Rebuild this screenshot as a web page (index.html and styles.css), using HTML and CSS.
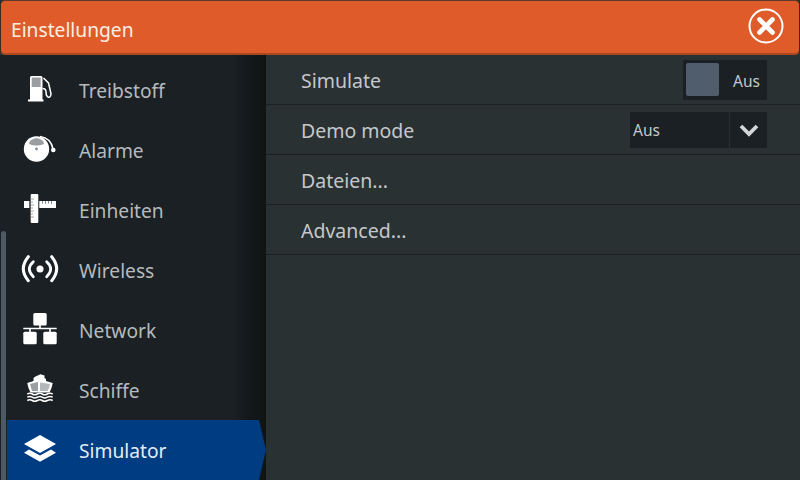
FILE: index.html
```html
<!DOCTYPE html>
<html lang="de">
<head>
    <meta charset="UTF-8">
    <title>Einstellungen</title>
    <link rel="stylesheet" href="styles.css">
</head>
<body>
    <div class="screen">
        <header class="title-bar">
            <span class="title">Einstellungen</span>
            <svg class="close-icon" width="36" height="36" viewBox="0 0 36 36">
                <circle cx="18" cy="18" r="16.5" fill="none" stroke="#fff" stroke-width="2"/>
                <path d="M11.5 11.5 L24.5 24.5 M24.5 11.5 L11.5 24.5" stroke="#fff" stroke-width="4.6" stroke-linecap="round"/>
            </svg>
        </header>

        <div class="main">
            <nav class="sidebar">
                <div class="scrollbar"></div>
                <div class="menu-item">
                    <svg class="menu-icon" width="40" height="40" viewBox="0 0 40 40">
                        <path d="M10 7.500 Q10 6 11.500 6 H21 Q22.500 6 22.500 7.500 V29.500 H23.500 V31.500 H8 V29.500 H10 Z" fill="#fff"/>
                        <rect x="11.700" y="7.500" width="9" height="9.500" fill="#9a9ea1"/>
                        <path d="M23.500 8 L28.500 13 Q30 19 31 24 Q30.500 28 28 27 Q26 26 26 22 Q26 18.500 22.500 18.500" fill="none" stroke="#fff" stroke-width="1.500"/>
                    </svg>
                    <span>Treibstoff</span>
                </div>
                <div class="menu-item">
                    <svg class="menu-icon" width="40" height="40" viewBox="0 0 40 40">
                        <circle cx="16.500" cy="19" r="12.700" fill="#fff"/>
                        <path d="M9 14 Q9 9.500 16.500 8 Q24 9.500 24 14 Q16.500 17 9 14 Z" fill="#9a9ea1"/>
                        <circle cx="16.500" cy="19" r="1.400" fill="#8a8e91"/>
                        <path d="M20 6.500 Q31 8 33 19" fill="none" stroke="#fff" stroke-width="1.500"/>
                        <circle cx="33.300" cy="20" r="2.300" fill="#fff"/>
                    </svg>
                    <span>Alarme</span>
                </div>
                <div class="menu-item">
                    <svg class="menu-icon" width="40" height="40" viewBox="0 0 40 40">
                        <rect x="10.700" y="4" width="7.600" height="29" rx="1" fill="#fff"/>
                        <path d="M10.700 9 H14 M10.700 12 H13 M10.700 15 H14 M10.700 18 H13 M10.700 21 H14 M10.700 24 H13 M10.700 27 H14" stroke="#8a8e91" stroke-width="0.800"/>
                        <path d="M4 11 H9.300 V18 H4 Z M19.300 11 H36 V18 H19.300 Z" fill="#fff"/>
                        <path d="M22.500 11 V13.500 M25.500 11 V14 M28.500 11 V13.500 M31.500 11 V14" stroke="#6c7073" stroke-width="0.800"/>
                    </svg>
                    <span>Einheiten</span>
                </div>
                <div class="menu-item">
                    <svg class="menu-icon" width="40" height="40" viewBox="0 0 40 40">
                        <circle cx="20" cy="19" r="3.500" fill="#fff"/>
                        <path d="M13.300 11.700 Q5.300 19 13.300 26.700 M26.700 11.700 Q34.700 19 26.700 26.700" fill="none" stroke="#fff" stroke-width="2.800" stroke-linecap="round"/>
                        <path d="M8.300 6.700 Q-1.700 19 8.300 30.700 M31.700 6.700 Q41.700 19 31.700 30.700" fill="none" stroke="#fff" stroke-width="3" stroke-linecap="round"/>
                    </svg>
                    <span>Wireless</span>
                </div>
                <div class="menu-item">
                    <svg class="menu-icon" width="40" height="40" viewBox="0 0 40 40">
                        <rect x="13.300" y="3" width="13.400" height="12.500" rx="1.500" fill="#fff"/>
                        <rect x="3.300" y="21.700" width="13.400" height="12.600" rx="1.500" fill="#fff"/>
                        <rect x="23.300" y="21.700" width="13.400" height="12.600" rx="1.500" fill="#fff"/>
                        <path d="M20 15 V18.500 M3.300 18.500 H36.700 M10 18.500 V22 M30 18.500 V22" stroke="#fff" stroke-width="1.600" fill="none"/>
                    </svg>
                    <span>Network</span>
                </div>
                <div class="menu-item">
                    <svg class="menu-icon" width="40" height="40" viewBox="0 0 40 40">
                        <path d="M15.500 6.500 L20.500 4.300 L24.500 5.500 V8 L26 9 V11 L32.700 13 Q32 18 29.500 22.500 H10.500 Q8 18 7.300 13 L13.500 11 V8 Z" fill="#fff"/>
                        <path d="M10 14 L18 12 V21 H12 Z" fill="#9a9ea1"/>
                        <path d="M20 12.500 L30 14 Q29.500 18 27.500 21 H20 Z" fill="#b5b8ba"/>
                        <path d="M7.300 24 Q10 22.500 12.300 24 T17.300 24 T22.300 24 T27.300 24 T32.700 24 M7.300 27.200 Q10 25.700 12.300 27.200 T17.300 27.200 T22.300 27.200 T27.300 27.200 T32.700 27.200 M7.300 30.500 Q10 29 12.300 30.500 T17.300 30.500 T22.300 30.500 T27.300 30.500 T32.700 30.500" fill="none" stroke="#fff" stroke-width="1.500"/>
                    </svg>
                    <span>Schiffe</span>
                </div>
                <div class="menu-item active">
                    <svg class="menu-icon" width="40" height="40" viewBox="0 0 40 40">
                        <path d="M20 5 L36 14 L20 23 L4 14 Z" fill="#fff"/>
                        <path d="M9 19.500 L20 25.500 L31 19.500 L36 22.800 L20 31.700 L4 22.800 Z" fill="#fff"/>
                    </svg>
                    <span>Simulator</span>
                </div>
            </nav>

            <section class="content">
                <div class="row">
                    <span class="row-label">Simulate</span>
                    <div class="toggle">
                        <div class="toggle-knob"></div>
                        <span class="small-text toggle-text">Aus</span>
                    </div>
                </div>
                <div class="row">
                    <span class="row-label">Demo mode</span>
                    <div class="select">
                        <span class="small-text select-value">Aus</span>
                        <div class="select-arrow">
                            <svg width="22" height="14" viewBox="0 0 22 14">
                                <path d="M3 3 L11 11 L19 3" fill="none" stroke="#d4d6d7" stroke-width="3.800"/>
                            </svg>
                        </div>
                    </div>
                </div>
                <div class="row"><span class="row-label">Dateien...</span></div>
                <div class="row"><span class="row-label">Advanced...</span></div>
            </section>
        </div>
    </div>
</body>
</html>
```

FILE: styles.css
```css
body {
    margin: 0;
    font-family: "Noto Sans", "Open Sans", sans-serif;
    background-color: #2a3133;
    color: #c4c8ca;
}

.screen {
    width: 800px;
    height: 480px;
    display: flex;
    flex-direction: column;
    overflow: hidden;
}

.title-bar {
    box-sizing: border-box;
    height: 55px;
    flex-shrink: 0;
    display: flex;
    align-items: center;
    justify-content: space-between;
    padding: 0 15px 3px 10px;
    background-color: #df5c2a;
    border-top: 1px solid #5a3a28;
    border-bottom: 2px solid #a8481f;
    border-left: 1px solid #3a2a20;
    border-right: 1px solid #3a2a20;
    border-radius: 5px;
}

.title {
    font-size: 19.2px;
    color: #fdeee4;
    padding-top: 7px;
}

.main {
    flex: 1;
    display: flex;
    min-height: 0;
}

.sidebar {
    position: relative;
    box-sizing: border-box;
    width: 266px;
    flex-shrink: 0;
    padding: 5px 0 0 7px;
    background: linear-gradient(to right, #1a2024 0, #1a2024 232px, #12181a 250px, #101513 266px);
}

.scrollbar {
    position: absolute;
    left: 1px;
    top: 176px;
    width: 5px;
    height: 249px;
    border-radius: 3px 3px 0 0;
    background-color: #4d5a63;
}

.menu-item {
    height: 60px;
    display: flex;
    align-items: center;
    font-size: 19.2px;
    color: #b6babc;
}

.menu-icon {
    margin-left: 13px;
    margin-right: 19px;
    flex-shrink: 0;
}

.menu-item.active {
    width: 259px;
    color: #e4ecf2;
    background-color: #003c82;
    clip-path: polygon(0 0, 252px 0, 259px 30px, 252px 60px, 0 60px);
}

.content {
    flex: 1;
}

.row {
    box-sizing: border-box;
    height: 50px;
    display: flex;
    align-items: center;
    justify-content: space-between;
    padding: 0 33px 0 35px;
    font-size: 19.5px;
    border-bottom: 1px solid #1b2123;
}

.row-label {
    padding-top: 2px;
}

.small-text {
    font-size: 15.5px;
    color: #c4c8ca;
}

.toggle {
    box-sizing: border-box;
    width: 84px;
    height: 40px;
    display: flex;
    align-items: center;
    justify-content: space-between;
    padding: 0 7px 0 3px;
    background-color: #1a2024;
}

.toggle-knob {
    width: 33px;
    height: 33px;
    border-radius: 2px;
    background-color: #505d6c;
}

.toggle-text {
    padding-top: 3px;
}

.select {
    width: 137px;
    height: 36px;
    display: flex;
    background-color: #1a2024;
}

.select-value {
    flex: 1;
    padding-left: 3px;
    line-height: 36px;
}

.select-arrow {
    width: 37px;
    display: flex;
    align-items: center;
    justify-content: center;
    border-left: 1px solid #2a3133;
}
```
